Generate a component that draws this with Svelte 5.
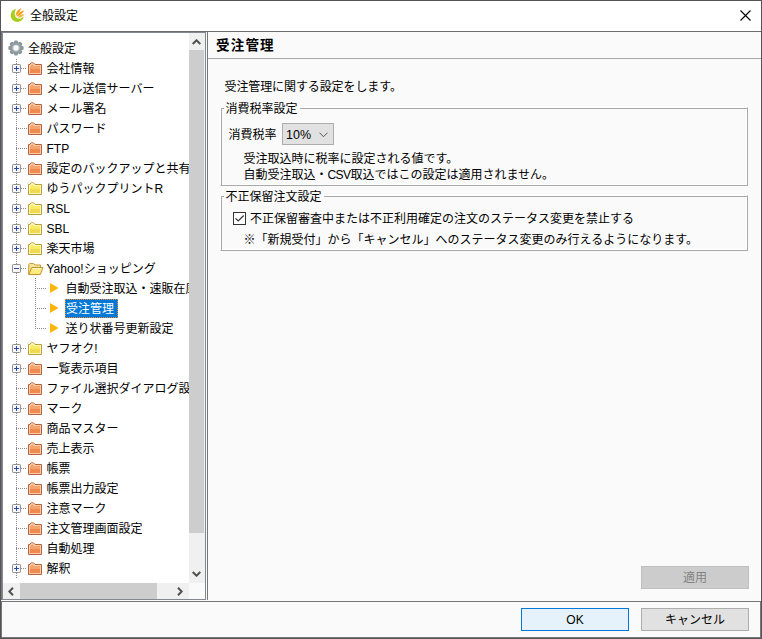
<script>
    let selected = '受注管理';
    let blockStatus = true;

    const tree = [
        { label: '会社情報', toggle: '+', color: 'red' },
        { label: 'メール送信サーバー', toggle: '+', color: 'red' },
        { label: 'メール署名', toggle: '+', color: 'red' },
        { label: 'パスワード', color: 'red' },
        { label: 'FTP', color: 'red' },
        { label: '設定のバックアップと共有', toggle: '+', color: 'red' },
        { label: 'ゆうパックプリントR', toggle: '+', color: 'yellow' },
        { label: 'RSL', toggle: '+', color: 'yellow' },
        { label: 'SBL', toggle: '+', color: 'yellow' },
        { label: '楽天市場', toggle: '+', color: 'yellow' },
        {
            label: 'Yahoo!ショッピング', toggle: '-', color: 'yellow',
            children: ['自動受注取込・速販在庫', '受注管理', '送り状番号更新設定']
        },
        { label: 'ヤフオク!', toggle: '+', color: 'yellow' },
        { label: '一覧表示項目', toggle: '+', color: 'red' },
        { label: 'ファイル選択ダイアログ設定', color: 'red' },
        { label: 'マーク', toggle: '+', color: 'red' },
        { label: '商品マスター', color: 'red' },
        { label: '売上表示', color: 'red' },
        { label: '帳票', toggle: '+', color: 'red' },
        { label: '帳票出力設定', color: 'red' },
        { label: '注意マーク', toggle: '+', color: 'red' },
        { label: '注文管理画面設定', color: 'red' },
        { label: '自動処理', color: 'red' },
        { label: '解釈', toggle: '+', color: 'red' }
    ];
</script>

<div class="window">
    <div class="titlebar">
        <svg class="logo" width="15" height="15" viewBox="0 0 15 15" fill="none">
            <path d="M6 .8 C2.2 1.8 .2 5.2 .9 8.8 C1.7 12.5 5 14.6 8.8 13.8 C11.5 13.2 13.4 11 13.7 8.3 C12.2 10.3 10 11.1 8 10.6 C4.6 9.8 3.6 5.4 6 .8Z" fill="#a5cf1c" />
            <path d="M5.6 8 C5.5 4.3 7.8 1.3 11.2 .2 C10.2 3.3 8.6 5.8 5.6 8Z" fill="#f5a51c" />
            <path d="M6.4 8.8 C7.8 5.3 10.5 2.8 14.3 2.4 C12.4 5.1 10.2 7.6 6.4 8.8Z" fill="#f59a16" />
            <path d="M7.5 9.5 C9.3 7.2 11.6 6 14.5 6.2 C12.8 8.7 10.5 9.9 7.5 9.5Z" fill="#f7b43c" />
        </svg>
        <span class="title">全般設定</span>
        <svg class="close" width="11" height="11" viewBox="0 0 11 11">
            <path d="M.5 .5 L10.5 10.5 M10.5 .5 L.5 10.5" stroke="#000" stroke-width="1.1" />
        </svg>
    </div>

    <div class="main">
        <div class="sidebar">
            <div class="tree">
                <div class="row root">
                    <svg width="16" height="16" viewBox="0 0 16 16">
                        <g fill="#8c9a9c">
                            <circle cx="8" cy="8" r="6.2" />
                            {#each [0, 45, 90, 135] as angle}
                                <rect x="6.1" y="0.4" width="3.8" height="15.2" rx="1" transform="rotate({angle} 8 8)" />
                            {/each}
                        </g>
                        <circle cx="8" cy="8" r="4.1" fill="#a8b4b5" />
                        <circle cx="8" cy="8" r="2.7" fill="#fff" />
                    </svg>
                    <span class="label">全般設定</span>
                </div>
                <div class="branches">
                    {#each tree as node}
                        <div class="row">
                            <span class="join" class:leaf={!node.toggle}>
                                {#if node.toggle}
                                    <svg width="9" height="9" viewBox="0 0 9 9">
                                        <rect x=".5" y=".5" width="8" height="8" rx=".7" fill="#f7f7f7" stroke="#919191" />
                                        <path d="M2 4.5 H7" stroke="#2b4fa8" />
                                        {#if node.toggle === '+'}
                                            <path d="M4.5 2 V7" stroke="#2b4fa8" />
                                        {/if}
                                    </svg>
                                {/if}
                                <i></i>
                            </span>
                            {#if node.children}
                                <svg class="folder" width="16" height="14" viewBox="0 0 16 14">
                                    <path d="M.7 12.5 V2.7 L1.7 1.5 H5.5 L7 3 H12.5 V5.5" fill="#f5e597" stroke="#c69a35" />
                                    <path d="M.8 12.5 L3.8 5.5 H15 L12.3 12.5Z" fill="#ffeb80" stroke="#c3912a" />
                                    <path d="M4.5 6.5 H13.5" stroke="#fffbd8" />
                                </svg>
                            {:else}
                                <svg class="folder {node.color}" width="16" height="14" viewBox="0 0 16 14">
                                    <path class="edge" d="M.5 12.5 V2.5 H2 L3 .9 H5.7 L7 2.5 H13.5 V12.5Z" />
                                    <path class="shine" d="M1 12 V3 H2.3 L3.2 1.5 H5.4 L6.7 3 H13 V12Z" />
                                    <path class="face" d="M2 7 V4 H3 L3.7 2.6 H4.8 L6 4 H12 V7Z" />
                                    <rect class="face low" x="2" y="7" width="10" height="4" />
                                </svg>
                            {/if}
                            <span class="label">{node.label}</span>
                        </div>
                        {#if node.children}
                            <div class="children">
                                {#each node.children as child}
                                    <div class="row child">
                                        <i></i>
                                        <svg width="9" height="10" viewBox="0 0 9 10">
                                            <path d="M0 0 L8.5 5 L0 10Z" fill="#fbb40b" />
                                        </svg>
                                        <span class="label" class:selected={child === selected}>{child}</span>
                                    </div>
                                {/each}
                            </div>
                        {/if}
                    {/each}
                </div>
            </div>
            <div class="scroll vertical">
                <div class="arrow"><svg width="9" height="6" viewBox="0 0 9 6"><path d="M.7 5 L4.5 1.3 L8.3 5" /></svg></div>
                <div class="thumb"></div>
                <div class="arrow"><svg width="9" height="6" viewBox="0 0 9 6"><path d="M.7 1 L4.5 4.7 L8.3 1" /></svg></div>
            </div>
            <div class="scroll horizontal">
                <div class="arrow"><svg width="6" height="9" viewBox="0 0 6 9"><path d="M5 .7 L1.3 4.5 L5 8.3" /></svg></div>
                <div class="thumb"></div>
                <div class="arrow"><svg width="6" height="9" viewBox="0 0 6 9"><path d="M1 .7 L4.7 4.5 L1 8.3" /></svg></div>
            </div>
        </div>

        <div class="content">
            <h1>受注管理</h1>
            <div class="settings">
                <p class="intro">受注管理に関する設定をします。</p>
                <div class="group tax">
                    <span class="legend">消費税率設定</span>
                    <div class="field">
                        <span>消費税率</span>
                        <div class="select">
                            <span>10%</span>
                            <svg width="9" height="6" viewBox="0 0 9 6"><path d="M.5 .7 L4.5 4.7 L8.5 .7" fill="none" stroke="#555" /></svg>
                        </div>
                    </div>
                    <p>受注取込時に税率に設定される値です。</p>
                    <p>自動受注取込・<span class="csv">CSV</span>取込ではこの設定は適用されません。</p>
                </div>
                <div class="group hold">
                    <span class="legend">不正保留注文設定</span>
                    <div class="check" on:click={() => blockStatus = !blockStatus}>
                        <svg width="13" height="13" viewBox="0 0 13 13">
                            <rect x=".5" y=".5" width="12" height="12" fill="#fff" stroke="#333" />
                            {#if blockStatus}
                                <path d="M2.5 6.3 L5.2 9 L10.7 3.5" fill="none" stroke="#333" stroke-width="1.2" />
                            {/if}
                        </svg>
                        <span>不正保留審査中または不正利用確定の注文のステータス変更を禁止する</span>
                    </div>
                    <p>※「新規受付」から「キャンセル」へのステータス変更のみ行えるようになります。</p>
                </div>
            </div>
            <button class="apply" disabled>適用</button>
        </div>
    </div>

    <div class="footer">
        <button class="ok">OK</button>
        <button>キャンセル</button>
    </div>
</div>


<style>
    :global(body) {
        margin: 0;
        background: #fafafa;
    }
    .window, .window * {
        box-sizing: border-box;
    }
    .window {
        width: 762px;
        height: 639px;
        display: flex;
        flex-direction: column;
        border: 1px solid #555355;
        background: #fafafa;
        color: #000;
        font-family: "Liberation Sans", "Noto Sans CJK JP", sans-serif;
        font-size: 12px;
        line-height: 16px;
        white-space: nowrap;
        overflow: hidden;
    }
    svg {
        display: block;
        flex: none;
    }
    p {
        margin: 0;
    }
    .titlebar {
        height: 30px;
        flex: none;
        display: flex;
        align-items: center;
        padding: 0 10px 2px 9px;
        background: #fff;
    }
    .title {
        margin: 2px auto 0 5px;
    }
    .main {
        height: 569px;
        flex: none;
        display: flex;
        border-top: 1px solid #6c6c6e;
        border-left: 1px solid #77777a;
    }
    .sidebar {
        width: 204px;
        height: 568px;
        flex: none;
        display: grid;
        grid-template-columns: 186px 16px;
        grid-template-rows: 550px 16px;
        border: 1px solid #828790;
    }
    .tree {
        padding: 5px 0 0 5px;
        background: #fff;
        overflow: hidden;
    }
    .row {
        height: 20px;
        display: flex;
        align-items: center;
    }
    .label {
        padding-top: 2px;
    }
    .root .label {
        margin-left: 4px;
    }
    .branches {
        padding-left: 4px;
        background: repeating-linear-gradient(#888 0 1px, transparent 1px 2px) 8px 1px / 1px 100% no-repeat;
    }
    .join {
        width: 16px;
        display: flex;
        align-items: center;
        flex: none;
    }
    .join.leaf {
        padding-left: 4px;
    }
    .join i {
        flex: 1;
        height: 1px;
        margin-right: 1px;
        background: repeating-linear-gradient(90deg, #888 0 1px, transparent 1px 2px);
    }
    .folder {
        margin: 1px 2.5px 0 0;
    }
    .red .edge {
        fill: #fbd0ad;
        stroke: #b9603e;
    }
    .red .shine {
        fill: #fbcdaa;
    }
    .red .face {
        fill: #f3a36d;
    }
    .red .low {
        fill: #ef8a4e;
    }
    .yellow .edge {
        fill: #fffbc0;
        stroke: #bf9d35;
    }
    .yellow .shine {
        fill: #fffbc0;
    }
    .yellow .face {
        fill: #f8ec67;
    }
    .yellow .low {
        fill: #efd951;
    }
    .children {
        margin-left: 23px;
        background: repeating-linear-gradient(#888 0 1px, transparent 1px 2px) 0 0 / 1px 51px no-repeat;
    }
    .child i {
        width: 11px;
        height: 1px;
        flex: none;
        margin-right: 4px;
        background: repeating-linear-gradient(90deg, #888 0 1px, transparent 1px 2px);
    }
    .child .label {
        height: 19px;
        margin-left: 6px;
        padding: 2px 3px 0 .5px;
    }
    .child .selected {
        width: 53px;
        padding: 1px 0 0;
        background: #0078d7;
        color: #fff;
        border: 1px dotted #ff8728;
    }
    .scroll {
        display: flex;
        background: #f0f0f0;
    }
    .vertical {
        flex-direction: column;
    }
    .arrow {
        width: 17px;
        height: 16px;
        display: flex;
        align-items: center;
        justify-content: center;
    }
    .arrow path {
        fill: none;
        stroke: #505050;
        stroke-width: 2;
    }
    .vertical .arrow {
        width: 15px;
        height: 17px;
    }
    .thumb {
        background: #cdcdcd;
    }
    .vertical .thumb {
        width: 15px;
        height: 483px;
        margin-bottom: 32px;
    }
    .horizontal .arrow {
        width: 16px;
    }
    .horizontal .thumb {
        width: 137px;
        margin: 0 15px 0 1px;
    }
    .content {
        flex: 1;
        height: 568px;
        display: flex;
        flex-direction: column;
        margin-left: 1px;
        border-left: 1px solid #77777a;
    }
    h1 {
        height: 27px;
        flex: none;
        margin: 0;
        padding: 5px 0 0 8px;
        border-bottom: 1px solid #aaa;
        font-size: 13.5px;
        line-height: 18px;
        letter-spacing: 1.2px;
    }
    .settings {
        flex: 1;
        padding: 20px 12px 0;
    }
    .intro {
        padding-left: 4.5px;
        letter-spacing: -.1px;
    }
    .group {
        width: 528px;
        border: 1px solid;
        border-color: #fff #a9a9a9 #a9a9a9 #fff;
        box-shadow: inset 1px 1px 0 #a9a9a9, inset -1px -1px 0 #fff;
    }
    .tax {
        height: 79px;
        margin-top: 12px;
    }
    .hold {
        height: 56px;
        margin-top: 9px;
    }
    .legend {
        display: block;
        width: max-content;
        height: 16px;
        margin: -7px 0 0 2.5px;
        padding: 0 2px;
        background: #fafafa;
    }
    .field {
        display: flex;
        align-items: center;
        gap: 5px;
        margin: 6px 0 6px 8px;
    }
    .field > span {
        padding-top: 2px;
        margin-left: -.5px;
        margin-right: .5px;
    }
    .select {
        width: 52px;
        height: 22px;
        display: flex;
        align-items: center;
        justify-content: space-between;
        padding: 1px 5px 0 3px;
        background: #e1e1e1;
        border: 1px solid #adadad;
        font-size: 12.5px;
    }
    .group p {
        padding-left: 22.5px;
    }
    .csv {
        letter-spacing: -.6px;
    }
    .check {
        height: 16px;
        display: flex;
        align-items: center;
        gap: 4px;
        margin: 5px 0 6px 12px;
    }
    .check span {
        padding-top: 1px;
    }
    button {
        width: 108px;
        height: 23px;
        padding: 1px 0 0;
        background: #e1e1e1;
        border: 1px solid #adadad;
        border-radius: 0;
        color: #000;
        font: inherit;
    }
    .apply {
        align-self: flex-end;
        margin: 0 12px 11px 0;
        background: #ccc;
        border-color: #bfbfbf;
        color: #838383;
    }
    .footer {
        height: 37px;
        flex: none;
        display: flex;
        justify-content: flex-end;
        gap: 12px;
        margin-top: 1px;
        padding: 6px 11px 0 0;
        border: 1px solid #77777a;
    }
    .ok {
        background: #e5f1fb;
        border-color: #0078d7;
    }
</style>
